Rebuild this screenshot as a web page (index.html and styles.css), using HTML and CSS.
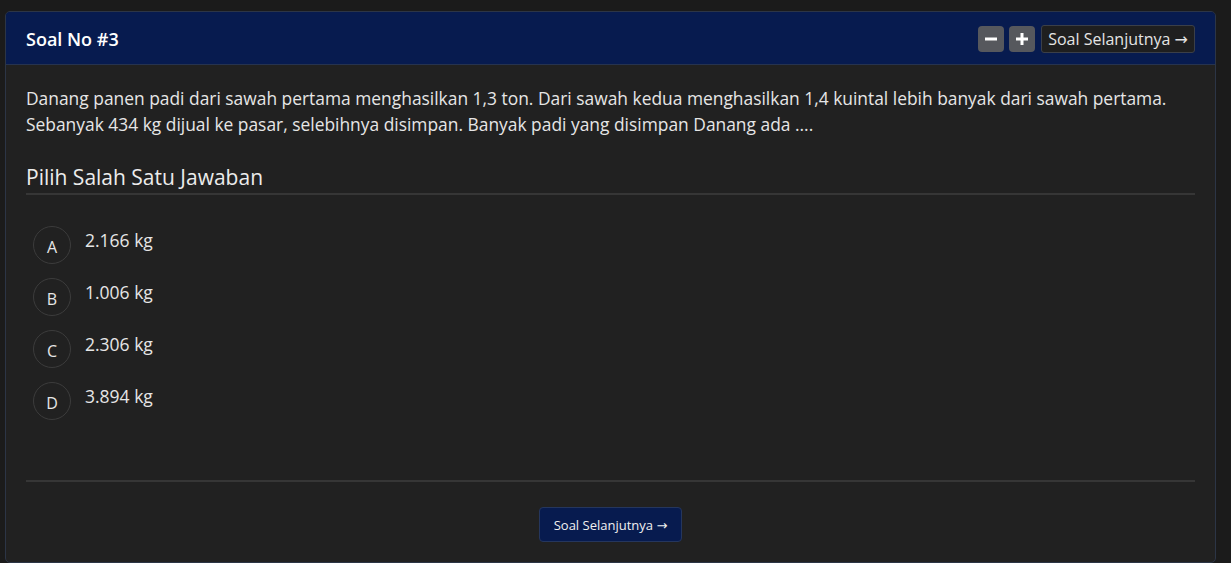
FILE: index.html
```html
<!DOCTYPE html>
<html>
<head>
<meta charset="utf-8">
<link rel="stylesheet" href="styles.css">
</head>
<body>
<div class="card">
  <div class="card-header">
    <div class="title">Soal No #3</div>
    <div class="tools">
      <button class="icon-btn" aria-label="kecilkan"><svg width="12" height="12" viewBox="0 0 12 12"><rect x="0" y="4.5" width="12" height="3" fill="#fff"/></svg></button>
      <button class="icon-btn" aria-label="besarkan"><svg width="12" height="12" viewBox="0 0 12 12"><rect x="0" y="4.5" width="12" height="3" fill="#fff"/><rect x="4.5" y="0" width="3" height="12" fill="#fff"/></svg></button>
      <button class="next-small">Soal Selanjutnya <span class="arrow">→</span></button>
    </div>
  </div>
  <div class="card-body">
    <p class="question">Danang panen padi dari sawah pertama menghasilkan 1,3 ton. Dari sawah kedua menghasilkan 1,4 kuintal lebih banyak dari sawah pertama. Sebanyak 434 kg dijual ke pasar, selebihnya disimpan. Banyak padi yang disimpan Danang ada ....</p>
    <h3 class="choose">Pilih Salah Satu Jawaban</h3>
    <ul class="options">
      <li class="option"><span class="letter">A</span><span class="answer">2.166 kg</span></li>
      <li class="option"><span class="letter">B</span><span class="answer">1.006 kg</span></li>
      <li class="option"><span class="letter">C</span><span class="answer">2.306 kg</span></li>
      <li class="option"><span class="letter">D</span><span class="answer">3.894 kg</span></li>
    </ul>
    <div class="footer">
      <button class="next-main">Soal Selanjutnya <span class="arrow">→</span></button>
    </div>
  </div>
</div>
</body>
</html>
```
FILE: styles.css
```css
html, body {
  margin: 0;
  padding: 0;
  background: #1b1b1b;
  font-family: "Open Sans", "Noto Sans", sans-serif;
  color: #e6e6e6;
}
body {
  padding: 11px 15px 0 5px;
  height: 563px;
  box-sizing: border-box;
  overflow: hidden;
}
.card {
  border: 1px solid #2c3546;
  border-radius: 5px;
  background: #212121;
  height: 552px;
  box-sizing: border-box;
  overflow: hidden;
}
.card-header {
  background: #071b4f;
  height: 53px;
  box-sizing: border-box;
  border-bottom: 1px solid #26334f;
  display: flex;
  align-items: center;
  justify-content: space-between;
  padding: 0 20px 0 20px;
}
.title {
  color: #fff;
  font-weight: 600;
  font-size: 18px;
  margin-top: 1px;
}
.tools {
  display: flex;
  align-items: center;
  gap: 5px;
  margin-top: 1px;
}
.icon-btn {
  width: 26px;
  height: 26px;
  border: none;
  border-radius: 4px;
  background: #56585d;
  display: flex;
  align-items: center;
  justify-content: center;
  padding: 0;
}
.next-small {
  height: 28px;
  padding: 0 6px;
  background: #1f1f1f;
  border: 1px solid #3b3f48;
  border-radius: 3px;
  color: #e4e4e4;
  font-family: "Open Sans", sans-serif;
  font-size: 16px;
  margin-left: 1px;
}
.arrow {
  font-family: "DejaVu Sans", sans-serif;
}
.card-body {
  padding: 20px 20px 0 20px;
}
.question {
  margin: 0;
  font-size: 17.4px;
  line-height: 26px;
  color: #e6e6e6;
}
.choose {
  margin: 25px 0 0 0;
  font-weight: 400;
  font-size: 21px;
  line-height: 30px;
  padding-bottom: 1px;
  border-bottom: 2px solid #363636;
  color: #ececec;
}
.options {
  list-style: none;
  margin: 31px 0 0 0;
  padding: 0 0 0 7px;
}
.option {
  display: flex;
  align-items: flex-start;
  height: 52px;
}
.letter {
  width: 38px;
  height: 38px;
  box-sizing: border-box;
  border: 1px solid #3c3c3c;
  border-radius: 50%;
  display: flex;
  align-items: center;
  justify-content: center;
  padding-top: 3px;
  font-size: 16px;
  color: #e6e6e6;
  margin-right: 14px;
}
.answer {
  font-size: 17.5px;
  line-height: 24px;
  margin-top: 2px;
  color: #e6e6e6;
}
.footer {
  margin-top: 46px;
  border-top: 2px solid #363636;
  display: flex;
  justify-content: center;
  padding-top: 25px;
}
.next-main {
  height: 35px;
  padding: 0 14px;
  background: #071b4f;
  border: 1px solid #25365d;
  border-radius: 4px;
  color: #f0f0f0;
  font-family: "Open Sans", sans-serif;
  font-size: 13px;
}
```
